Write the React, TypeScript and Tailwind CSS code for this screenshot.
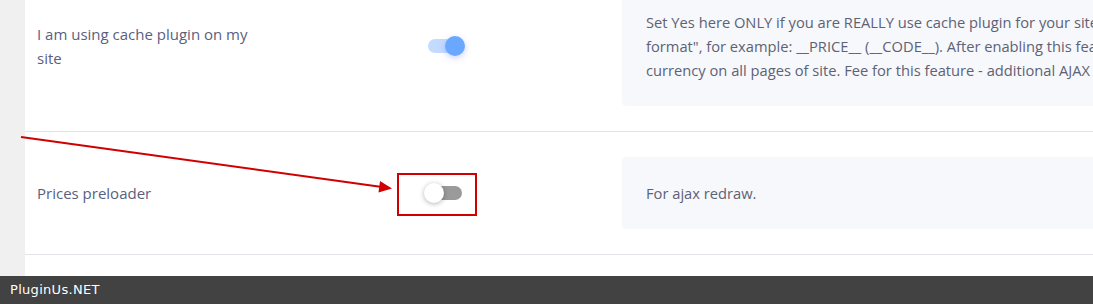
import React from "react";

function Toggle({ on }: { on: boolean }) {
  return (
    <div className="relative w-[34px] h-[14px]">
      <div className={on ? "absolute inset-0 rounded-full bg-[#c3dbff]" : "absolute inset-0 rounded-full bg-[#9a9a9a]"} />
      <div
        className={
          on
            ? "absolute top-1/2 -translate-y-1/2 right-[-3px] w-[20px] h-[20px] rounded-full bg-[#6aa8ff] shadow-[0_2px_6px_rgba(106,120,255,0.35)]"
            : "absolute top-1/2 -translate-y-1/2 left-[-4px] w-[20px] h-[20px] rounded-full bg-white shadow-[0_1px_5px_rgba(0,0,0,0.3)]"
        }
      />
    </div>
  );
}

export default function App() {
  return (
    <div className="relative w-[1093px] h-[304px] overflow-hidden bg-white flex flex-col" style={{ fontFamily: "'Open Sans', 'Noto Sans', sans-serif" }}>
      <div className="flex flex-1 min-h-0">
        <div className="w-[25px] bg-[#f0f0f0] shrink-0" />
        <div className="flex-1 min-w-0 overflow-hidden">
          <div className="-mt-[39px] w-[1300px]">
            {/* Row 1 */}
            <div className="flex items-center border-b border-[#e2e2e8] py-[25px]">
              <div className="w-[250px] pl-[12px] text-[15px] leading-[24px] text-[#5a5f80]">
                I am using cache plugin on my site
              </div>
              <div className="w-[347px] pl-[153px] flex items-center">
                <Toggle on />
              </div>
              <div className="flex-1 rounded-[4px] bg-[#f7f8fc] px-[24px] py-[24px] text-[14.7px] leading-[24px] text-[#5d6275]">
                Set Yes here ONLY if you are REALLY use cache plugin for your site with option "Currency format", for example: __PRICE__ (__CODE__). After enabling this feature you will see right currency on all pages of site. Fee for this feature - additional AJAX request
              </div>
            </div>
            {/* Row 2 */}
            <div className="flex items-center border-b border-[#e2e2e8] py-[25px]">
              <div className="w-[250px] pl-[12px] text-[15px] leading-[24px] text-[#5a5f80]">
                Prices preloader
              </div>
              <div className="w-[347px] pl-[153px] flex items-center">
                <Toggle on={false} />
              </div>
              <div className="flex-1 rounded-[4px] bg-[#f7f8fc] px-[24px] py-[24px] text-[14.7px] leading-[24px] text-[#5d6275]">
                For ajax redraw.
              </div>
            </div>
          </div>
        </div>
      </div>
      <div className="h-[28px] bg-[#424242] flex items-center pl-[10px] text-white text-[13px] tracking-[0.3px]" style={{ fontFamily: "'DejaVu Sans', sans-serif" }}>
        PluginUs.NET
      </div>

      {/* annotation */}
      <div className="absolute left-[397px] top-[173px] w-[80px] h-[43px] border-2 border-[#d00000]" />
      <svg className="absolute left-0 top-0" width="1093" height="304" viewBox="0 0 1093 304">
        <line x1="21" y1="137" x2="382" y2="187" stroke="#d00000" strokeWidth="2" />
        <polygon points="392,188.5 380,181 378.5,192.5" fill="#d00000" />
      </svg>
    </div>
  );
}
